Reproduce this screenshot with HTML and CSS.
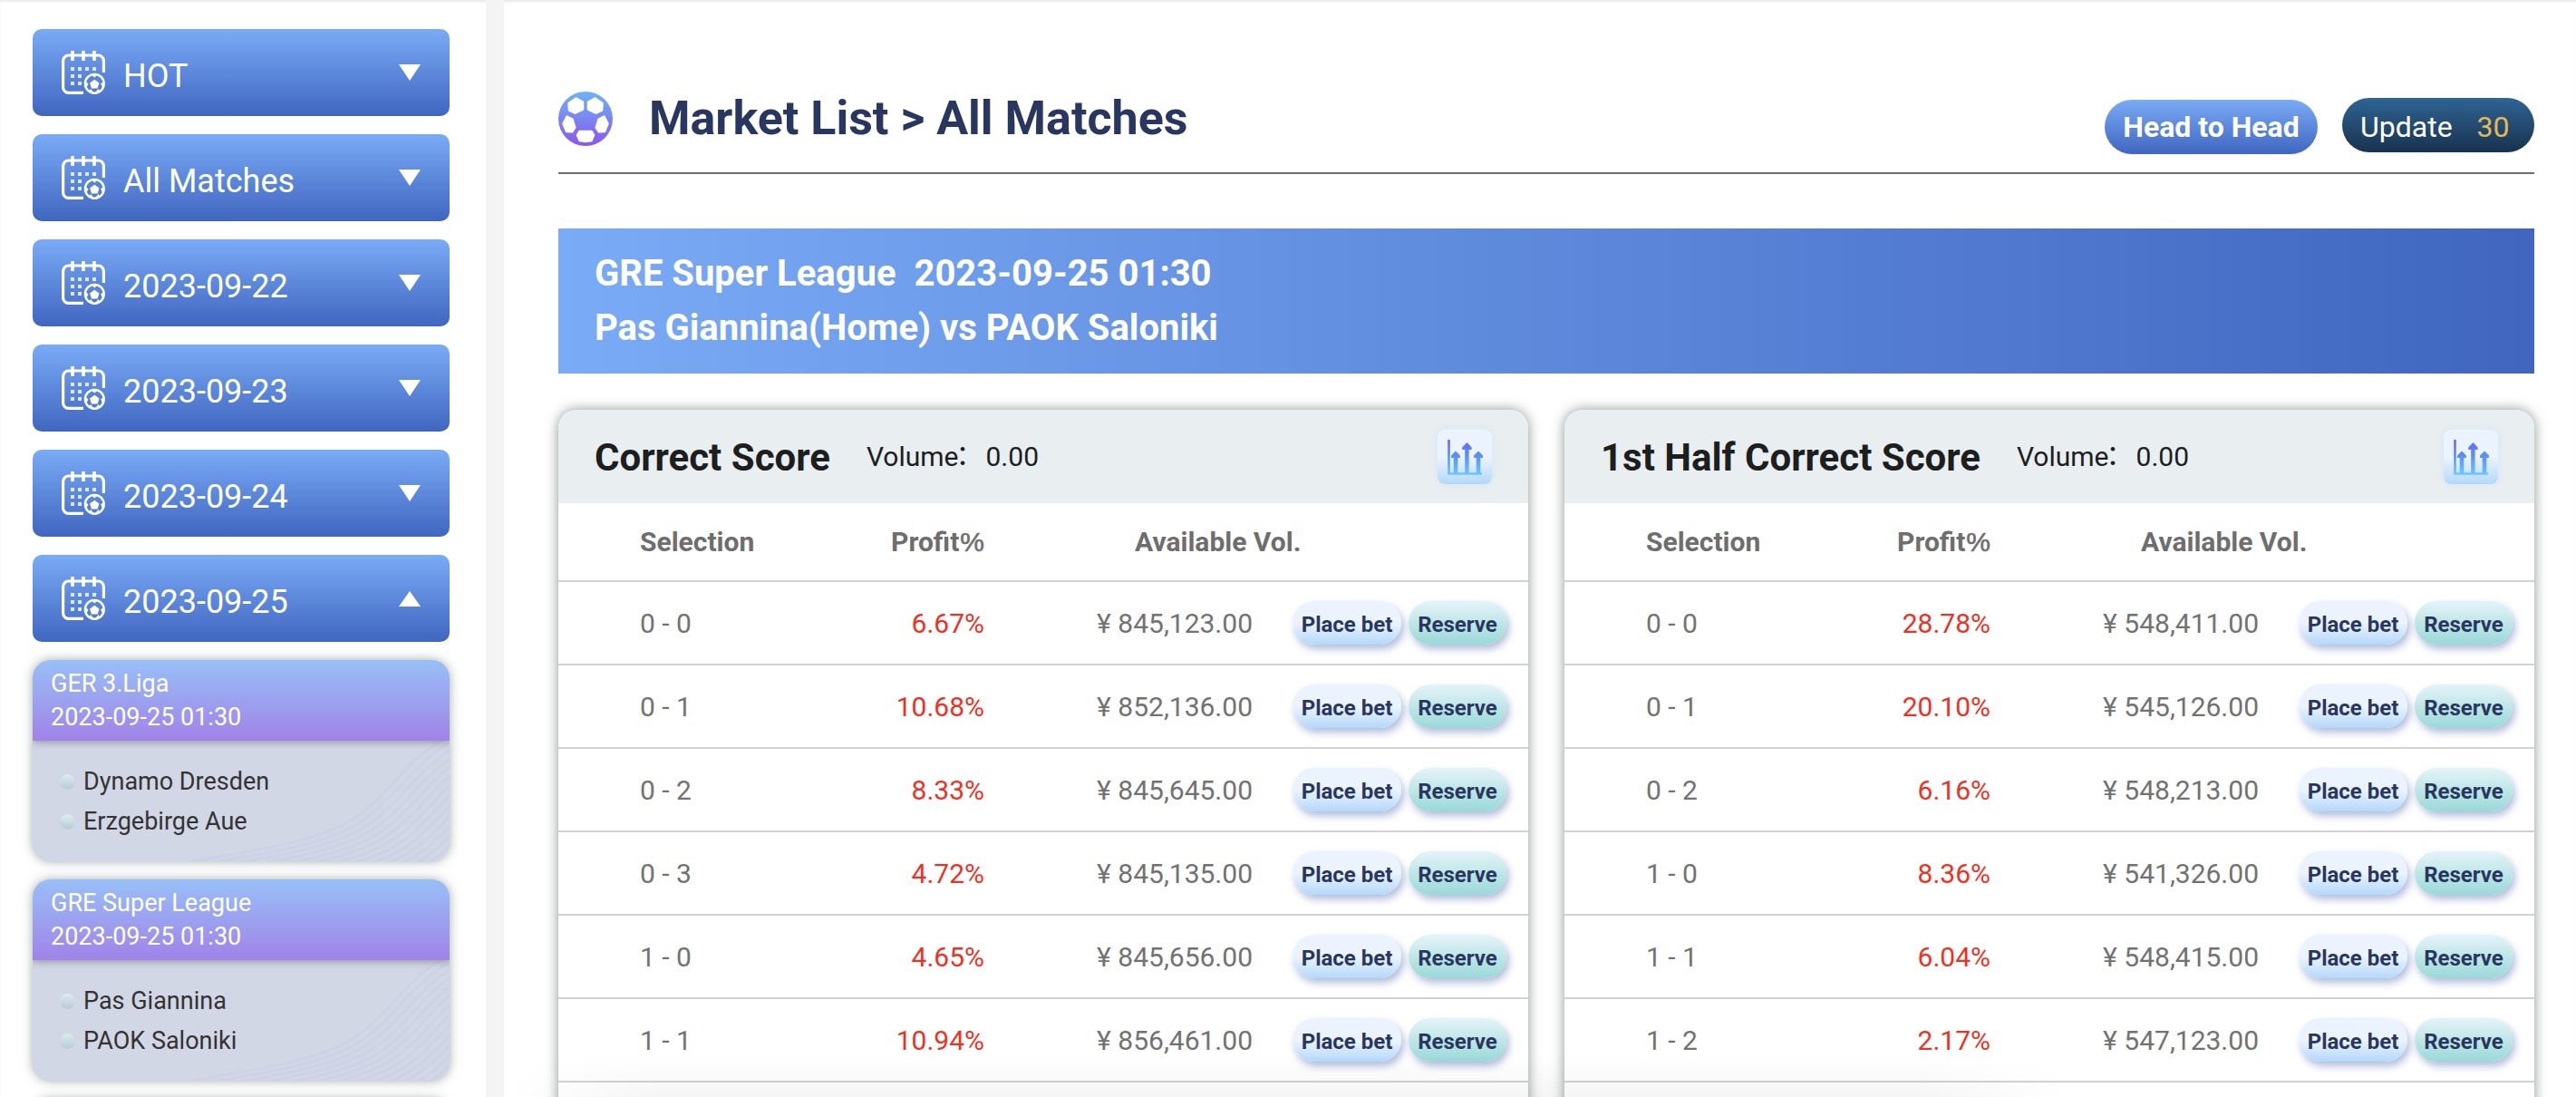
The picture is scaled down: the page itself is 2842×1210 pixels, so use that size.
FILE: index.html
```html
<!DOCTYPE html>
<html lang="en">
<head>
<meta charset="utf-8">
<title>Market List</title>
<link rel="stylesheet" href="styles.css">
</head>
<body>
<svg class="defs" width="0" height="0" aria-hidden="true">
  <defs>
    <linearGradient id="ballFill" x1="0" y1="0" x2="0" y2="1"><stop offset="0" stop-color="#6db4f6"/><stop offset="1" stop-color="#8b56ec"/></linearGradient>
    <linearGradient id="chartFill" gradientUnits="userSpaceOnUse" x1="0" y1="10" x2="0" y2="50"><stop offset="0" stop-color="#6a63f3"/><stop offset=".5" stop-color="#5b92f8"/><stop offset="1" stop-color="#6cc9fa"/></linearGradient>
    <symbol id="calendar" viewBox="0 0 48 48">
      <g fill="none" stroke="#fff">
        <path d="M46.400 24V11a6 6 0 0 0-6-6H7.600a6 6 0 0 0-6 6v29.400a6 6 0 0 0 6 6H24" stroke-width="3.200"/>
        <path d="M12 0v11M24 0v11M36 0v11" stroke-width="3.600"/>
        <circle cx="36.300" cy="36.300" r="10.400" stroke-width="2.400"/>
      </g>
      <path d="M10 18h4v4h-4zM18 18h4v4h-4zM26 18h4v4h-4zM34 18h4v4h-4zM10 26h4v4h-4zM18 26h4v4h-4zM10 34h4v4h-4zM18 34h4v4h-4z" fill="#fff" opacity=".8"/>
      <path d="M36.300 31.700l5.200 3.700-1.900 6h-6.600l-1.900-6zM32.500 26h7.600l-3.800 3.600zM26 33.500l3.400 3-1.900 4.200zM46.600 33.500l-3.400 3 1.900 4.200zM30.900 45.700l.9-4 3.600 4.400zM41.700 45.700l-.9-4-3.600 4.400z" fill="#fff"/>
    </symbol>
    <symbol id="chart" viewBox="0 0 60 60">
      <path d="M12.500 11v37.500H49" fill="none" stroke="url(#chartFill)" stroke-width="2.600"/>
      <path d="M17.700 48V31H15v-2.500l5-5 5 5V31h-2.700v17zM30.200 48V22h-3v-2.500l5.200-5.500 5.200 5.500V22h-3v26zM42.700 48V31H40v-2.500l5-5 5 5V31h-2.700v17z" fill="url(#chartFill)"/>
    </symbol>
  </defs>
</svg>
<div class="app">
  <aside class="sidebar" id="sidebar"></aside>
  <main class="main">
    <header class="page-head">
      <svg class="ball" viewBox="0 0 60 60"><circle cx="30" cy="30" r="30" fill="url(#ballFill)"/><g fill="#fff" stroke="#fff" stroke-width="2.500" stroke-linejoin="round"><path d="M19.500 7.500L27 11.500V19.500l-8.500 4-6.500-3 -.5-7.500zM40.500 7.500L33 11.500V19.500l8.500 4 6.500-3 .5-7.500zM9.500 27.500l6 3 2.700 9-3 4.800-6.200-.3-3.500-8.500zM50.500 27.500l-6 3-2.700 9 3 4.800 6.200-.3 3.500-8.500zM23.500 44h13l2.500 4-2.500 6-6.500 1-6.500-1-2.500-6z"/></g></svg>
      <h1>Market List &gt; All Matches</h1>
      <div class="actions">
        <button class="h2h">Head to Head</button>
        <button class="update">Update<span>30</span></button>
      </div>
    </header>
    <section class="banner">
      <div>GRE Super League&nbsp; 2023-09-25 01:30</div>
      <div>Pas Giannina(Home) vs PAOK Saloniki</div>
    </section>
    <div class="panels" id="panels"></div>
  </main>
</div>
<div class="fade"></div>
<script src="app.js"></script>
</body>
</html>
```
FILE: styles.css
```css
* { box-sizing: border-box; }
body { margin: 0; height: 1210px; overflow: hidden; background: #fff; color: #222; font-family: Roboto, "Noto Sans CJK SC", sans-serif; }
.defs { position: absolute; }
.app { display: flex; height: 1210px; box-shadow: inset 0 3px 3px -1px #e9e9e9; overflow: hidden; }

.sidebar { width: 556px; flex: none; padding: 32px 40px 0 36px; border-right: 20px solid #f4f4f4; display: flex; flex-direction: column; gap: 20px; }
.day { flex: none; height: 96px; border-radius: 10px; background: linear-gradient(#7aabf6, #4066c0); color: #fff; display: flex; align-items: center; padding: 0 32px; font-size: 36px; line-height: 42px; }
.day svg { width: 48px; height: 48px; margin-right: 20px; }
.day span { padding-top: 8px; }
.day i { margin-left: auto; border: 12px solid transparent; border-top: 18px solid #fff; border-bottom: 0; }
.day.open i { border-top: 0; border-bottom: 17px solid #fff; }

.match { flex: none; height: 222px; border-radius: 20px; overflow: hidden; background: #d1d7e5; box-shadow: 0 0 12px rgba(80, 90, 90, .5); font-size: 27px; }
.match-head { position: relative; z-index: 1; height: 89px; padding: 8px 20px 6px; color: #fff; line-height: 37px; background: linear-gradient(#98c0f6, #a083e8); box-shadow: 0 2px 8px rgba(0, 0, 0, .3); }
.match-body { position: relative; height: 133px; padding: 23px 28px 0; color: #333; }
.match-body svg { position: absolute; right: 0; bottom: 0; width: 285px; height: 133px; }
.team { position: relative; display: flex; align-items: center; height: 44px; }
.team::before { content: ""; width: 17px; height: 17px; margin: 0 9px 0 2px; border-radius: 50%; background: linear-gradient(#dfebf1, #b5cbd5); }

.main { flex: 1; min-width: 0; padding: 100px 46px 0 60px; }
.page-head { height: 92px; display: flex; border-bottom: 2px solid #6e6e70; }
.ball { width: 60px; height: 60px; margin-top: 1px; }
h1 { margin: 1px 0 0 40px; font-size: 52px; line-height: 60px; font-weight: 700; color: #293760; }
.actions { margin-left: auto; display: flex; gap: 27px; }
button { border: 0; font-family: inherit; padding: 0; white-space: nowrap; }
.h2h { width: 235px; height: 60px; margin-top: 10px; border-radius: 30px; color: #fff; font-size: 32px; font-weight: 700; background: linear-gradient(#7aabf6, #4066c0); }
.update { width: 212px; height: 60px; margin-top: 8px; border-radius: 30px; color: #fff; font-size: 32px; padding: 4px 0 0 20px; text-align: left; background: linear-gradient(#2f6494, #18324e); }
.update span { margin-left: 27px; color: #e6b956; }
.banner { margin-top: 60px; height: 160px; padding: 20px 40px; color: #fff; font-size: 40px; line-height: 60px; font-weight: 700; background: linear-gradient(90deg, #7aabf6, #4066c0); }

.panels { margin-top: 40px; display: grid; grid-template-columns: 1070px 1070px; gap: 40px; }
.panel { height: 900px; border-radius: 20px; background: #fff; box-shadow: 0 0 14px rgba(60, 80, 70, .6); overflow: hidden; }
.panel-head { height: 103px; padding: 0 40px; display: flex; align-items: center; background: #e9eef1; color: #1d1f1f; }
.panel-head h2 { margin: 2px 40px 0 0; font-size: 42px; font-weight: 700; line-height: 50px; }
.volume { font-size: 30px; line-height: 36px; }
.colon { margin: 0 3px 0 -3px; line-height: 0; vertical-align: 2px; }
.chart { width: 60px; height: 60px; margin-left: auto; border-radius: 8px; background: linear-gradient(#ebf4fe 50%, #b4d8fa); box-shadow: 0 0 8px #d4e5f5; }
.row { display: grid; grid-template-columns: 170px 210px 296px 1fr; height: 92px; padding-left: 90px; padding-right: 24px; align-items: center; border-bottom: 2px solid #d1d2d3; font-size: 30px; color: #727272; }
.row.titles { height: 87px; font-weight: 700; color: #6e6e6e; }
.available { padding-left: 166px; white-space: nowrap; }
.percent { font-family: "Liberation Sans", sans-serif; font-weight: 400; margin-left: 1px; -webkit-text-stroke: .6px; }
.pct, .vol { text-align: right; }
.row .red { color: #ee3124; }
.bets { display: flex; justify-content: flex-end; gap: 8px; }
.bets button { height: 48px; border-radius: 24px; font-size: 24px; font-weight: 700; color: #293760; padding-top: 3px; box-shadow: 3px 5px 8px rgba(60, 90, 160, .4); }
.bets .place { width: 120px; background: linear-gradient(#ebf4fe 50%, #b4d8fa); }
.bets .reserve { width: 108px; background: linear-gradient(#e4f4f8, #9ad9d8); }
.fade { position: absolute; left: 560px; right: 560px; bottom: 0; height: 46px; background: linear-gradient(transparent, rgba(0, 0, 0, .04)); -webkit-mask: linear-gradient(90deg, transparent, #000 10%, #000 90%, transparent); }
```
FILE: app.js
```js
const days = ['HOT', 'All Matches', '2023-09-22', '2023-09-23', '2023-09-24', '2023-09-25'];
const matches = [
  ['GER 3.Liga', 'Dynamo Dresden', 'Erzgebirge Aue'],
  ['GRE Super League', 'Pas Giannina', 'PAOK Saloniki'],
  ['', '', '']
];
const markets = [
  ['Correct Score', [['0 - 0', '6.67', '845,123'], ['0 - 1', '10.68', '852,136'], ['0 - 2', '8.33', '845,645'], ['0 - 3', '4.72', '845,135'], ['1 - 0', '4.65', '845,656'], ['1 - 1', '10.94', '856,461']]],
  ['1st Half Correct Score', [['0 - 0', '28.78', '548,411'], ['0 - 1', '20.10', '545,126'], ['0 - 2', '6.16', '548,213'], ['1 - 0', '8.36', '541,326'], ['1 - 1', '6.04', '548,415'], ['1 - 2', '2.17', '547,123']]]
];

// Fan of curved stripes in the lower right corner of each match card
let waves = '';
for (let i = 0; i < 26; i++) {
  waves += `<path transform="translate(${i * 7} ${i * 4})" d="M-200 155L0 133C90 118 150 108 185 82S235 25 275 0L330 -40"/>`;
}

document.getElementById('sidebar').innerHTML =
  days.map((d, i) => `<div class="day${i === 5 ? ' open' : ''}"><svg><use href="#calendar"/></svg><span>${d}</span><i></i></div>`).join('') +
  matches.map(([league, home, away]) => `<div class="match">
    <div class="match-head"><div>${league}</div><div>${league && '2023-09-25 01:30'}</div></div>
    <div class="match-body"><svg viewBox="0 0 285 133" fill="none" stroke="#cdd2e7" stroke-width="3">${waves}</svg>
      <div class="team">${home}</div><div class="team">${away}</div></div></div>`).join('');

document.getElementById('panels').innerHTML = markets.map(([name, rows]) => `<section class="panel">
  <div class="panel-head"><h2>${name}</h2><div class="volume">Volume<span class="colon">：</span>0.00</div><svg class="chart"><use href="#chart"/></svg></div>
  <div class="row titles"><div>Selection</div><div class="pct">Profit<span class="percent">%</span></div><div class="available">Available Vol.</div></div>
  ${rows.map(([s, p, v]) => `<div class="row"><div>${s}</div><div class="pct red">${p}%</div><div class="vol">¥ ${v}.00</div>
    <div class="bets"><button class="place">Place bet</button><button class="reserve">Reserve</button></div></div>`).join('')}
</section>`).join('');
```
